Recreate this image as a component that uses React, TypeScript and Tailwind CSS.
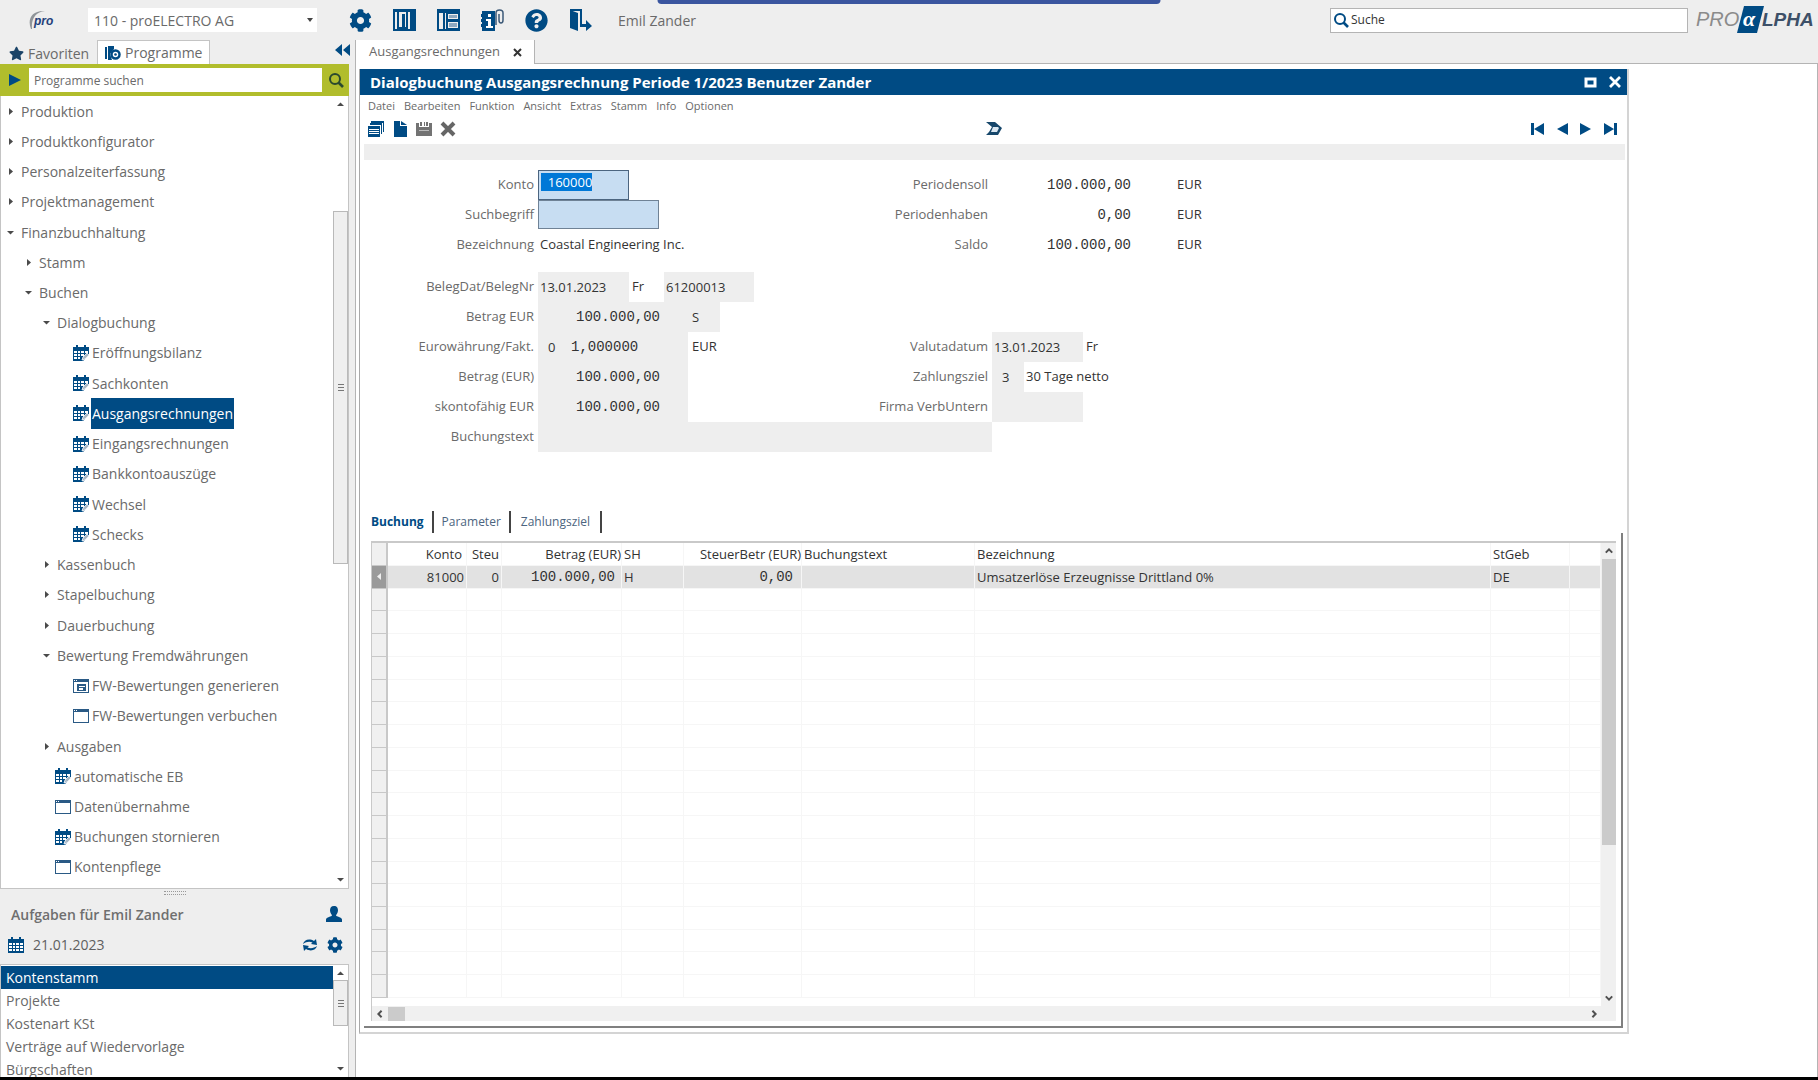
import React from "react";
import clsx from "clsx";
import { FaCog, FaQuestionCircle, FaStar } from "react-icons/fa";

type TreeItem = {
  label: string;
  level: number;
  kind: "open" | "closed" | "calendar" | "window" | "report";
  active?: boolean;
};

const tree: TreeItem[] = [
  { label: "Produktion", level: 0, kind: "closed" },
  { label: "Produktkonfigurator", level: 0, kind: "closed" },
  { label: "Personalzeiterfassung", level: 0, kind: "closed" },
  { label: "Projektmanagement", level: 0, kind: "closed" },
  { label: "Finanzbuchhaltung", level: 0, kind: "open" },
  { label: "Stamm", level: 1, kind: "closed" },
  { label: "Buchen", level: 1, kind: "open" },
  { label: "Dialogbuchung", level: 2, kind: "open" },
  { label: "Eröffnungsbilanz", level: 3, kind: "calendar" },
  { label: "Sachkonten", level: 3, kind: "calendar" },
  { label: "Ausgangsrechnungen", level: 3, kind: "calendar", active: true },
  { label: "Eingangsrechnungen", level: 3, kind: "calendar" },
  { label: "Bankkontoauszüge", level: 3, kind: "calendar" },
  { label: "Wechsel", level: 3, kind: "calendar" },
  { label: "Schecks", level: 3, kind: "calendar" },
  { label: "Kassenbuch", level: 2, kind: "closed" },
  { label: "Stapelbuchung", level: 2, kind: "closed" },
  { label: "Dauerbuchung", level: 2, kind: "closed" },
  { label: "Bewertung Fremdwährungen", level: 2, kind: "open" },
  { label: "FW-Bewertungen generieren", level: 3, kind: "report" },
  { label: "FW-Bewertungen verbuchen", level: 3, kind: "window" },
  { label: "Ausgaben", level: 2, kind: "closed" },
  { label: "automatische EB", level: 2, kind: "calendar" },
  { label: "Datenübernahme", level: 2, kind: "window" },
  { label: "Buchungen stornieren", level: 2, kind: "calendar" },
  { label: "Kontenpflege", level: 2, kind: "window" },
];

const tasks = ["Kontenstamm", "Projekte", "Kostenart KSt", "Verträge auf Wiedervorlage", "Bürgschaften"];

const menu = ["Datei", "Bearbeiten", "Funktion", "Ansicht", "Extras", "Stamm", "Info", "Optionen"];

const folderIndent = ["pl-[5px]", "pl-[23px]", "pl-[41px]"];
const leafIndent = ["pl-[18px]", "pl-[36px]", "pl-[54px]", "pl-[72px]"];

const emptyRows = Array.from({ length: 18 }, (_, i) => i);

/* ---------- icons ---------- */

const CalendarIcon = ({ pen = false }: { pen?: boolean }) => (
  <svg viewBox="0 0 16 16" className="size-4 shrink-0">
    <path d="M0 2h16v3H0zM3 0h2v3H3zM11 0h2v3h-2z" fill="#004b84" />
    <path d={pen ? "M0 5h16v5l-6 6H0z" : "M0 5h16v11H0z"} fill="#004b84" />
    <g fill="#fff">
      <path d="M1 6h3v2H1zM5 6h2v2H5zM8 6h3v2H8zM12 6h3v2h-3zM1 9h3v2H1zM5 9h2v2H5zM8 9h3v2H8zM1 12h3v2H1zM5 12h2v2H5z" />
      {!pen && <path d="M12 9h3v2h-3zM8 12h3v2H8zM12 12h3v2h-3z" />}
    </g>
    {pen && <path d="M9 15l1-3 4-4 2 2-4 4z" fill="#a9b8c6" stroke="#fff" strokeWidth="0.8" />}
  </svg>
);

const WindowIcon = ({ report = false }: { report?: boolean }) => (
  <svg viewBox="0 0 16 16" className="size-4 shrink-0" fill="#2a5a85">
    <path d="M0 1h16v14H0zM1 4v10h14V4z" fillRule="evenodd" />
    <path d="M1 2h1v1H1zM3 2h1v1H3z" fill="#fff" />
    {report && <path d="M4 6h9v7H4zM6 8v1h6V8zM6 10v2h4v-2z" fillRule="evenodd" />}
  </svg>
);

const Triangle = ({ dir }: { dir: "right" | "down" | "up" | "left" }) => {
  const d = {
    right: "M3 1l4 3.500-4 3.500z",
    down: "M1 3h7L4.500 6.500z",
    up: "M1 6h7L4.500 2.500z",
    left: "M6 1L2 4.500 6 8z",
  }[dir];
  return (
    <svg viewBox="0 0 9 9" className="size-[9px] shrink-0" fill="currentColor">
      <path d={d} />
    </svg>
  );
};

const Chevron = ({ d }: { d: string }) => (
  <svg viewBox="0 0 10 10" className="size-2" fill="none" stroke="#505050" strokeWidth="2.500">
    <path d={d} />
  </svg>
);

const Magnifier = () => (
  <svg viewBox="0 0 16 16" className="size-4" fill="none" stroke="currentColor">
    <circle cx="7" cy="7" r="5" strokeWidth="2" />
    <path d="M10.500 10.500L15 15" strokeWidth="2.600" />
  </svg>
);

const ProLogo = () => (
  <svg viewBox="0 0 30 22" className="h-[22px] w-[30px]" role="img" aria-label="pro">
    <path d="M3 20C-1 10 4 1 17 2 8 3 3 9 4 20z" fill="#8f9499" />
    <text x="6" y="16" fontFamily="Liberation Sans" fontSize="12" fontWeight="bold" fontStyle="italic" fill="#23407a">
      pro
    </text>
  </svg>
);

const BrandLogo = () => (
  <svg viewBox="0 0 120 30" className="h-[30px] w-[120px] shrink-0" role="img" aria-label="proALPHA">
    <g fontFamily="Liberation Sans" fontStyle="italic">
      <text x="0" y="21" fill="#8b8b8b" fontSize="20">PRO</text>
      <path d="M48 1h20l-7 27H41z" fill="#004b84" />
      <text x="47" y="21" fill="#fff" fontFamily="Liberation Serif" fontSize="22" fontWeight="bold">α</text>
      <text x="66" y="21" fill="#3d5068" fontWeight="bold" fontSize="19">LPHA</text>
    </g>
  </svg>
);

const toolbarIcons: { label: string; icon: React.ReactNode }[] = [
  { label: "Einstellungen", icon: <FaCog className="size-[23px]" /> },
  {
    label: "Spalten",
    icon: (
      <svg viewBox="0 0 23 22" className="h-[22px] w-[23px]">
        <path d="M0 0h23v22H0zM2 3v17h2V3zM6 3v15h7V3zM15 3v17h2V3z" fill="#004b84" fillRule="evenodd" />
        <path d="M9 5h3v13H9z" fill="#004b84" />
      </svg>
    ),
  },
  {
    label: "Layout",
    icon: (
      <svg viewBox="0 0 23 22" className="h-[22px] w-[23px]">
        <path d="M0 0h23v22H0zM2 4v16h4V4zM8 4v16h1V4zM11 5v5h10V5zM11 13v6h10v-6z" fill="#004b84" fillRule="evenodd" />
        <path d="M12 6h8v3h-8zM12 14h8v4h-8z" fill="#8fa9c0" />
      </svg>
    ),
  },
  {
    label: "Info",
    icon: (
      <svg viewBox="0 0 23 22" className="h-[22px] w-[23px]">
        <path d="M1 2h13v20H1zM0 5h2v3H0zM0 10h2v3H0zM0 15h2v3H0z" fill="#004b84" />
        <path d="M7 5h3v3H7zM5 10h5v7h2v2H5v-2h2v-5H5z" fill="#fff" />
        <path d="M15 16V4c0-4 7-4 7 0v7c0 4-4 4-4 0V5" fill="none" stroke="#3d5a78" strokeWidth="1.500" />
      </svg>
    ),
  },
  { label: "Hilfe", icon: <FaQuestionCircle className="size-[23px]" /> },
  {
    label: "Abmelden",
    icon: (
      <svg viewBox="0 0 23 22" className="h-[22px] w-[23px]" fill="#004b84">
        <path d="M1 1l8 3v18l-8-3z" />
        <path d="M1 0h12v12h-2V2H1zM11 12h2v3h4v-4l6 6-6 5v-4h-6z" />
      </svg>
    ),
  },
];

/* ---------- sidebar ---------- */

const TreeRow = ({ item }: { item: TreeItem }) => {
  const folder = item.kind === "open" || item.kind === "closed";
  return (
    <li className="flex min-h-0 flex-1">
      <button
        type="button"
        className={clsx(
          "flex w-full items-center text-left",
          folder ? folderIndent[item.level] : leafIndent[item.level]
        )}
      >
        {folder ? (
          <span className="flex w-[15px] text-[#4a4a4a]">
            <Triangle dir={item.kind === "open" ? "down" : "right"} />
          </span>
        ) : item.kind === "calendar" ? (
          <CalendarIcon pen />
        ) : (
          <WindowIcon report={item.kind === "report"} />
        )}
        <span
          className={clsx(
            "flex h-full items-center",
            !folder && "ml-0.5 px-px",
            item.active && "bg-[#004b84] text-white"
          )}
        >
          {item.label}
        </span>
      </button>
    </li>
  );
};

const Grip = () => (
  <span className="flex flex-col gap-0.5">
    <i className="h-px w-1.5 bg-[#777]" />
    <i className="h-px w-1.5 bg-[#777]" />
    <i className="h-px w-1.5 bg-[#777]" />
  </span>
);

const Sidebar = () => (
  <aside className="flex w-[355px] shrink-0 flex-col bg-[#eeeeee] text-[14px] text-[#6a6a6a]">
    <div className="flex h-6 items-stretch">
      <button type="button" className="flex w-[97px] items-center gap-1 pt-0.5 pl-[9px]">
        <FaStar className="size-[15px] text-[#1b4468]" />
        Favoriten
      </button>
      <button
        type="button"
        className="flex w-[113px] items-center gap-1 border border-b-0 border-[#c4c4c4] bg-white pl-[7px]"
      >
        <svg viewBox="0 0 16 16" className="size-4" fill="#004b84">
          <path d="M0 2h2v12H0zM3 1h6v3L5 9l2 6H3z" />
          <circle cx="10.500" cy="9.500" r="4" fill="#fff" stroke="#004b84" strokeWidth="2.500" />
          <circle cx="10.500" cy="9.500" r="1.300" />
        </svg>
        Programme
      </button>
      <button type="button" aria-label="Einklappen" className="mb-1 ml-auto flex items-center pr-[5px]">
        <svg viewBox="0 0 15 12" className="h-3 w-[15px]" fill="#004b84">
          <path d="M7 0v12L0 6zM15 0v12L8 6z" />
        </svg>
      </button>
    </div>

    <div className="mr-1.5 flex h-8 items-center bg-[#b1bd2c] pr-[5px] pl-[9px]">
      <button type="button" aria-label="Start" className="w-5 text-[#004b84]">
        <svg viewBox="0 0 12 12" className="size-3" fill="currentColor">
          <path d="M0 0l12 6-12 6z" />
        </svg>
      </button>
      <input
        type="text"
        aria-label="Programme suchen"
        placeholder="Programme suchen"
        className="h-6 min-w-0 flex-1 bg-white px-[5px] text-[12px] outline-none placeholder:text-[#6a6a6a]"
      />
      <button type="button" aria-label="Suchen" className="pl-1.5 text-[#2b4a2e]">
        <Magnifier />
      </button>
    </div>

    <div className="mr-1.5 flex min-h-0 flex-1 border border-t-0 border-[#c4c4c4] bg-white">
      <ul className="flex min-w-0 flex-1 flex-col overflow-hidden pb-1.5">
        {tree.map((item) => (
          <TreeRow key={item.label} item={item} />
        ))}
      </ul>
      <div className="flex w-[15px] flex-col items-center py-1 text-[#4a4a4a]">
        <Triangle dir="up" />
        <div className="mt-[102px] mb-auto flex h-[353px] w-[15px] items-center justify-center border border-[#b9b9b9] bg-[#efefef]">
          <Grip />
        </div>
        <Triangle dir="down" />
      </div>
    </div>

    <section className="flex h-[188px] shrink-0 flex-col">
      <div className="mr-1.5 flex h-2 items-center justify-center">
        <i className="h-1 w-[22px] border-y border-dotted border-[#999]" />
      </div>
      <div className="flex h-[34px] items-center justify-between pr-[13px] pl-[11px]">
        <h2 className="text-[14px] font-semibold text-[#6f6f6f]">Aufgaben für Emil Zander</h2>
        <svg viewBox="0 0 16 16" className="size-4" fill="#004b84">
          <path d="M8 0c3 0 4 2 4 4.500S10 9 10 9.500c0 1 6 1.500 6 4V16H0v-2.500c0-2.500 6-3 6-4C6 9 4 7 4 4.500S5 0 8 0z" />
        </svg>
      </div>
      <div className="flex h-[33px] items-center gap-[9px] pr-3 pb-1.5 pl-2 text-[#004b84]">
        <CalendarIcon />
        <span className="flex-1 text-[14px] text-[#5f5f5f]">21.01.2023</span>
        <button type="button" aria-label="Aktualisieren">
          <svg viewBox="0 0 16 14" className="h-3.5 w-4" fill="currentColor">
            <path d="M1 6C2 2 7 0 12 3l2-2 1 6-6-1 1.500-1.500C7 3 4 4 1 6zM15 8c-1 4-6 6-11 3l-2 2-1-6 6 1-1.500 1.500C9 11 12 10 15 8z" />
          </svg>
        </button>
        <button type="button" aria-label="Aufgaben einstellen">
          <FaCog className="size-4" />
        </button>
      </div>
      <div className="mr-1.5 flex min-h-0 flex-1 border border-b-0 border-[#c4c4c4] bg-white">
        <ul className="min-w-0 flex-1 overflow-hidden pt-px">
          {tasks.map((task, i) => (
            <li key={task}>
              <button
                type="button"
                className={clsx(
                  "flex h-[23px] w-full items-center pl-[5px] text-left",
                  i === 0 && "bg-[#004b84] text-white"
                )}
              >
                {task}
              </button>
            </li>
          ))}
        </ul>
        <div className="flex w-[15px] flex-col items-center py-1 text-[#4a4a4a]">
          <Triangle dir="up" />
          <div className="mt-0.5 mb-auto flex h-[46px] w-[15px] items-center justify-center border border-[#b9b9b9] bg-[#efefef]">
            <Grip />
          </div>
          <Triangle dir="down" />
        </div>
      </div>
    </section>
  </aside>
);

/* ---------- booking form ---------- */

const mono = "font-['Liberation_Mono',monospace] text-[14px]";

const Label = ({ id, children }: { id: string; children: React.ReactNode }) => (
  <label htmlFor={id} className="self-center pr-1 text-right text-[#6a6a6a]">
    {children}
  </label>
);

const Field = ({ id, label, value, className }: { id?: string; label?: string; value: string; className: string }) => (
  <input
    id={id}
    aria-label={label}
    type="text"
    readOnly
    value={value}
    className={clsx("h-[30px] bg-[#eeeeee] px-0.5 text-[#333] outline-none", className)}
  />
);

const Total = ({ id, label, value }: { id: string; label: string; value: string }) => (
  <>
    <Label id={id}>{label}</Label>
    <div className="flex items-center">
      <output id={id} className={clsx("w-[139px] text-right", mono)}>
        {value}
      </output>
      <span className="pl-[46px]">EUR</span>
    </div>
  </>
);

const formGrid = "grid auto-rows-[30px] grid-cols-[178px_323px_131px_1fr]";

const BookingForm = () => {
  const kontoRef = React.useRef<HTMLInputElement>(null);

  React.useEffect(() => {
    kontoRef.current?.focus();
    kontoRef.current?.select();
  }, []);

  return (
    <form className="flex flex-col gap-3 pt-2.5 text-[13px] text-[#333]">
      <div className={formGrid}>
        <Label id="konto">Konto</Label>
        <div>
          <input
            id="konto"
            ref={kontoRef}
            type="text"
            defaultValue="  160000"
            className="h-[30px] w-[91px] border border-[#4c6580] bg-[#c7ddf2] px-0.5 pb-1.5 outline-none selection:bg-[#0078d7] selection:text-white"
          />
        </div>
        <Total id="soll" label="Periodensoll" value="100.000,00" />

        <Label id="suchbegriff">Suchbegriff</Label>
        <div>
          <input
            id="suchbegriff"
            type="text"
            className="h-[29px] w-[121px] border border-[#6f8296] bg-[#c7ddf2] px-0.5 outline-none"
          />
        </div>
        <Total id="haben" label="Periodenhaben" value="0,00" />

        <Label id="bezeichnung">Bezeichnung</Label>
        <output id="bezeichnung" className="self-center pl-0.5">Coastal Engineering Inc.</output>
        <Total id="saldo" label="Saldo" value="100.000,00" />
      </div>

      <div className={formGrid}>
        <Label id="belegdat">BelegDat/BelegNr</Label>
        <div className="col-span-3 flex items-center">
          <Field id="belegdat" value="13.01.2023" className="w-[91px]" />
          <span className="w-[35px] pl-[3px]">Fr</span>
          <Field label="BelegNr" value="61200013" className="w-[90px]" />
        </div>

        <Label id="betrag">Betrag EUR</Label>
        <div className="col-span-3 flex items-center">
          <Field id="betrag" value="100.000,00" className={clsx("w-[150px] pr-7 text-right", mono)} />
          <Field label="Soll/Haben" value="S" className="w-8 pl-1" />
        </div>

        <Label id="euro">Eurowährung/Fakt.</Label>
        <div className="flex items-center">
          <Field id="euro" value="0" className="w-[29px] pl-2.5" />
          <Field label="Faktor" value="1,000000" className={clsx("w-[121px] pl-1", mono)} />
          <span className="pl-1">EUR</span>
        </div>
        <Label id="valuta">Valutadatum</Label>
        <div className="flex items-center">
          <Field id="valuta" value="13.01.2023" className="w-[91px]" />
          <span className="pl-[3px]">Fr</span>
        </div>

        <Label id="betrag2">Betrag (EUR)</Label>
        <div className="flex items-center">
          <Field id="betrag2" value="100.000,00" className={clsx("w-[150px] pr-7 text-right", mono)} />
        </div>
        <Label id="ziel">Zahlungsziel</Label>
        <div className="flex items-center">
          <Field id="ziel" value="3" className="w-8 pl-2.5" />
          <span className="pl-0.5">30 Tage netto</span>
        </div>

        <Label id="skonto">skontofähig EUR</Label>
        <div className="flex items-center">
          <Field id="skonto" value="100.000,00" className={clsx("w-[150px] pr-7 text-right", mono)} />
        </div>
        <Label id="firma">Firma VerbUntern</Label>
        <div className="flex items-center">
          <Field id="firma" value="" className="w-[91px]" />
        </div>

        <Label id="text">Buchungstext</Label>
        <div className="col-span-2 flex items-center">
          <Field id="text" value="" className="w-full" />
        </div>
      </div>
    </form>
  );
};

/* ---------- booking table ---------- */

const cell = "truncate border-r border-b border-[#f6f6f6] p-0 font-normal";
const rowHead = "border-r-2 border-b border-[#c8c8c8] bg-[#f0f0f0] p-0";

const BookingTable = () => (
  <div className="mr-[5px] ml-1.5 flex min-h-0 flex-1 flex-col border-t-2 border-l border-[#c9c9c9]">
    <div className="flex min-h-0 flex-1">
      <div className="min-w-0 flex-1 pb-2">
        <table className="h-full w-full table-fixed border-separate border-spacing-0 text-[13px] leading-4 text-[#333]">
          <colgroup>
            <col className="w-4" />
            <col className="w-[79px]" />
            <col className="w-[35px]" />
            <col className="w-[120px]" />
            <col className="w-[62px]" />
            <col className="w-[118px]" />
            <col className="w-[173px]" />
            <col />
            <col className="w-[79px]" />
            <col className="w-[31px]" />
          </colgroup>
          <thead>
            <tr className="h-[23px]">
              <th className={rowHead} />
              <th className={clsx(cell, "pr-1 text-right")}>Konto</th>
              <th className={clsx(cell, "pr-0.5 text-right")}>Steu</th>
              <th className={clsx(cell, "text-right")}>Betrag (EUR)</th>
              <th className={clsx(cell, "pl-0.5 text-left")}>SH</th>
              <th className={clsx(cell, "text-right")}>SteuerBetr (EUR)</th>
              <th className={clsx(cell, "pl-0.5 text-left")}>Buchungstext</th>
              <th className={clsx(cell, "pl-0.5 text-left")}>Bezeichnung</th>
              <th className={clsx(cell, "pl-0.5 text-left")}>StGeb</th>
              <th className={cell} />
            </tr>
          </thead>
          <tbody>
            <tr className="h-[22px] bg-[#e2e2e2]">
              <td className="border-r-2 border-b border-[#c8c8c8] bg-[#9a9a9a] p-0 text-[#eee]">
                <span className="flex justify-center">
                  <Triangle dir="left" />
                </span>
              </td>
              <td className={clsx(cell, "pr-0.5 text-right")}>81000</td>
              <td className={clsx(cell, "pr-0.5 text-right")}>0</td>
              <td className={clsx(cell, "pr-1.5 text-right", mono)}>100.000,00</td>
              <td className={clsx(cell, "pl-0.5")}>H</td>
              <td className={clsx(cell, "pr-2 text-right", mono)}>0,00</td>
              <td className={cell} />
              <td className={clsx(cell, "pl-0.5")}>Umsatzerlöse Erzeugnisse Drittland 0%</td>
              <td className={clsx(cell, "pl-0.5")}>DE</td>
              <td className={cell} />
            </tr>
            {emptyRows.map((row) => (
              <tr key={row} className="h-[22px]">
                <td className={rowHead} />
                <td className={cell} />
                <td className={cell} />
                <td className={cell} />
                <td className={cell} />
                <td className={cell} />
                <td className={cell} />
                <td className={cell} />
                <td className={cell} />
                <td className={cell} />
              </tr>
            ))}
          </tbody>
        </table>
      </div>
      <div className="flex w-[15px] flex-col items-center bg-[#f0f0f0]">
        <div className="flex h-4 items-center">
          <Chevron d="M1 7l4-4 4 4" />
        </div>
        <div className="mb-auto h-[286px] w-3.5 bg-[#cbcbcb]" />
        <div className="flex h-4 items-center">
          <Chevron d="M1 3l4 4 4-4" />
        </div>
      </div>
    </div>
    <div className="flex h-[15px] items-center bg-[#f0f0f0] pr-[18px]">
      <div className="flex w-4 justify-center">
        <Chevron d="M7 1L3 5l4 4" />
      </div>
      <div className="mr-auto h-3.5 w-[17px] bg-[#cbcbcb]" />
      <Chevron d="M3 1l4 4-4 4" />
    </div>
  </div>
);

/* ---------- document window ---------- */

const DocumentWindow = () => (
  <section className="mr-[188px] mb-[43px] ml-[3px] flex min-h-0 flex-1 flex-col border-x-2 border-b-2 border-[#d4d4d4] border-l-[#a8a8a8] border-l">
    <header className="flex h-[26px] shrink-0 items-center bg-[#004b84] pr-1.5 pl-2.5 text-white">
      <h1 className="text-[15px] leading-6 font-bold">Dialogbuchung Ausgangsrechnung Periode 1/2023 Benutzer Zander</h1>
      <button type="button" aria-label="Maximieren" className="mr-3 ml-auto">
        <svg viewBox="0 0 13 11" className="h-[11px] w-[13px]">
          <path d="M2 2h9v7H2z" fill="none" stroke="#fff" strokeWidth="3" />
        </svg>
      </button>
      <button type="button" aria-label="Schließen">
        <svg viewBox="0 0 12 12" className="size-3">
          <path d="M1 1l10 10M11 1L1 11" stroke="#fff" strokeWidth="2.800" />
        </svg>
      </button>
    </header>

    <nav className="flex h-[22px] shrink-0 items-center gap-[9px] pl-2 text-[11px] text-[#6a6a6a]">
      {menu.map((entry) => (
        <button key={entry} type="button">
          {entry}
        </button>
      ))}
    </nav>

    <div className="flex h-[27px] shrink-0 items-center justify-between pr-2.5 pb-1 pl-2 text-[#004b84]">
      <div className="flex w-[88px] gap-2">
        <button type="button" aria-label="Liste">
          <svg viewBox="0 0 16 16" className="size-4" fill="currentColor">
            <path d="M3 0h13v2H3zM15 2h1v9h-1zM2 2h12v2H2zM13 4h1v9h-1z" />
            <path d="M0 5h12v11H0zM1 8v1h10V8zM1 10v1h10v-1zM1 12v1h10v-1z" fillRule="evenodd" />
          </svg>
        </button>
        <button type="button" aria-label="Neu">
          <svg viewBox="0 0 16 16" className="size-4" fill="currentColor">
            <path d="M2 0h6v5h7v11H2zM9 0l6 4H9z" />
          </svg>
        </button>
        <button type="button" aria-label="Speichern" className="text-[#737373]">
          <svg viewBox="0 0 16 16" className="size-4" fill="currentColor">
            <path d="M0 2h3v4h10V2h3v13H0zM4 1h2v4H4zM8 1h1v4H8zM10 1h2v4h-2z" />
            <path d="M3 9h10v1H3z" fill="#bbb" />
          </svg>
        </button>
        <button type="button" aria-label="Löschen" className="text-[#666]">
          <svg viewBox="0 0 16 16" className="size-4" stroke="currentColor" strokeWidth="4">
            <path d="M2 2l12 12M14 2L2 14" />
          </svg>
        </button>
      </div>
      <button type="button" aria-label="Workflow">
        <svg viewBox="0 0 18 13" className="h-[13px] w-[18px]">
          <path d="M1 0h9l7 6-4 7H1l3-3 3-5z" fill="#17476b" />
          <path d="M8 5h5l1 1-2 4H6z" fill="#dbe7f1" />
        </svg>
      </button>
      <div className="flex w-[86px] justify-between">
        <button type="button" aria-label="Erster">
          <svg viewBox="0 0 13 12" className="h-3 w-[13px]" fill="currentColor">
            <path d="M0 0h3v12H0zM13 0v12L3 6z" />
          </svg>
        </button>
        <button type="button" aria-label="Zurück">
          <svg viewBox="0 0 11 12" className="h-3 w-[11px]" fill="currentColor">
            <path d="M11 0v12L0 6z" />
          </svg>
        </button>
        <button type="button" aria-label="Weiter">
          <svg viewBox="0 0 11 12" className="h-3 w-[11px]" fill="currentColor">
            <path d="M0 0v12l11-6z" />
          </svg>
        </button>
        <button type="button" aria-label="Letzter">
          <svg viewBox="0 0 13 12" className="h-3 w-[13px]" fill="currentColor">
            <path d="M10 0h3v12h-3zM0 0v12l10-6z" />
          </svg>
        </button>
      </div>
    </div>

    <div className="mr-0.5 ml-1 h-4 shrink-0 bg-[#eeeeee]" />

    <BookingForm />

    <div className="mt-auto flex h-[521px] shrink-0 flex-col pr-1 pb-1">
      <div className="flex h-[22px] shrink-0 items-center pl-[11px] text-[12px]">
        <button type="button" className="h-full border-r-2 border-[#444] pr-2 font-bold text-[#004b84]">
          Buchung
        </button>
        <button type="button" className="h-full border-r-2 border-[#444] px-2 text-[#4c6580]">
          Parameter
        </button>
        <button type="button" className="h-full border-r-2 border-[#444] px-2.5 text-[#4c6580]">
          Zahlungsziel
        </button>
      </div>
      <div className="ml-1 flex min-h-0 flex-1 flex-col border-r-2 border-b-2 border-[#808080] pt-2 pb-[5px] pl-px">
        <BookingTable />
      </div>
    </div>
  </section>
);

const App = () => {
  return (
    <div className="relative flex h-screen flex-col overflow-hidden bg-[#eeeeee] font-['Open_Sans','Noto_Sans',sans-serif] text-[14px] text-[#6a6a6a]">
      <i className="absolute top-0 left-1/2 h-1 w-[503px] -translate-x-1/2 rounded-b bg-[#3a559f]" />

      <header className="flex h-10 shrink-0 items-center pr-0.5 pl-7">
        <ProLogo />
        <div className="relative ml-[30px] w-[229px]">
          <select
            aria-label="Firma"
            className="h-6 w-full appearance-none bg-white pl-1.5 text-[14px] outline-none"
          >
            <option>110 - proELECTRO AG</option>
          </select>
          <svg viewBox="0 0 6 4" className="pointer-events-none absolute top-2.5 right-1 h-1 w-1.5" fill="#444">
            <path d="M0 0h6L3 4z" />
          </svg>
        </div>
        <div className="ml-8 flex gap-[21px] text-[#004b84]">
          {toolbarIcons.map(({ label, icon }) => (
            <button key={label} type="button" aria-label={label}>
              {icon}
            </button>
          ))}
        </div>
        <span className="ml-[26px]">Emil Zander</span>
        <div className="ml-auto flex h-[25px] w-[358px] items-center gap-0.5 border border-[#b4b4b4] bg-white pl-0.5 text-[#004b84]">
          <Magnifier />
          <input
            type="search"
            aria-label="Suche"
            placeholder="Suche"
            className="min-w-0 flex-1 text-[12px] outline-none placeholder:text-[#333]"
          />
        </div>
        <div className="ml-2">
          <BrandLogo />
        </div>
      </header>

      <div className="flex min-h-0 flex-1">
        <Sidebar />
        <main className="flex min-w-0 flex-1 flex-col">
          <div className="flex h-6 shrink-0">
            <div className="flex w-[180px] items-center border-x border-[#b4b4b4] bg-white pl-[13px] text-[13px]">
              <span>Ausgangsrechnungen</span>
              <button type="button" aria-label="Tab schließen" className="mr-3 ml-auto">
                <svg viewBox="0 0 9 9" className="size-[9px]">
                  <path d="M1 1l7 7M8 1L1 8" stroke="#333" strokeWidth="2" />
                </svg>
              </button>
            </div>
            <div className="flex-1 border-b border-[#b4b4b4]" />
          </div>
          <div className="flex min-h-0 flex-1 flex-col border-x border-[#b4b4b4] bg-white pt-[5px]">
            <DocumentWindow />
          </div>
        </main>
      </div>
      <div className="h-[3px] shrink-0 bg-black" />
    </div>
  );
};

export default App;
